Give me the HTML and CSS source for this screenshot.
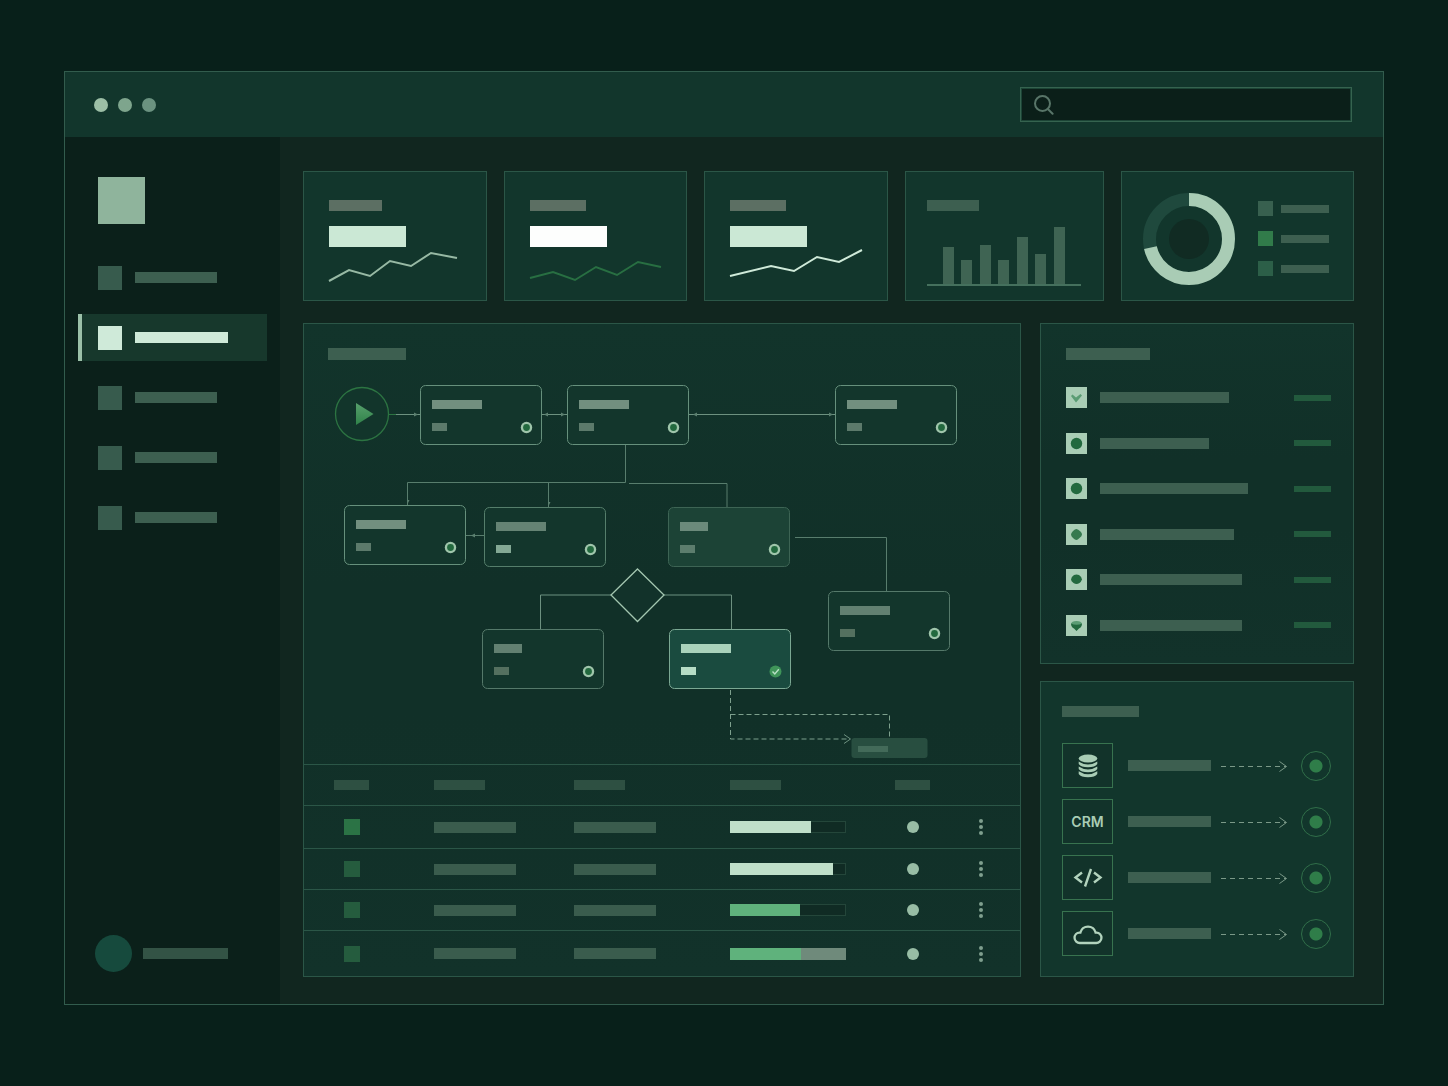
FILE: index.html
```html
<!DOCTYPE html>
<html lang="en">
<head>
<meta charset="utf-8">
<meta name="viewport" content="width=device-width, initial-scale=1">
<title>Workflow dashboard</title>
<link rel="stylesheet" href="styles.css">
</head>
<body>
<div class="window">
  <header class="titlebar">
    <div class="lights"><span class="light"></span><span class="light light-2"></span><span class="light light-3"></span></div>
    <label class="search">
      <svg width="20" height="20" viewBox="0 0 20 20" aria-hidden="true"><circle cx="8.5" cy="8.5" r="7.5"/><path d="M13.8 14 L18.6 18.8"/></svg>
      <input type="search" aria-label="Search">
    </label>
  </header>
  <div class="body">
    <aside class="sidebar">
      <div>
        <div class="logo"></div>
        <nav class="nav">
          <a class="nav-item" href="#overview" aria-label="Overview"><span class="nav-icon"></span><span class="bar nav-text"></span></a>
          <a class="nav-item active" href="#flows" aria-label="Flows" aria-current="page"><span class="nav-icon"></span><span class="bar nav-text"></span></a>
          <a class="nav-item" href="#tasks" aria-label="Tasks"><span class="nav-icon"></span><span class="bar nav-text"></span></a>
          <a class="nav-item" href="#reports" aria-label="Reports"><span class="nav-icon"></span><span class="bar nav-text"></span></a>
          <a class="nav-item" href="#settings" aria-label="Settings"><span class="nav-icon"></span><span class="bar nav-text"></span></a>
        </nav>
      </div>
      <div class="profile"><span class="avatar"></span><span class="bar profile-name"></span></div>
    </aside>

    <main class="main">
      <section class="kpis">
        <article class="card">
          <span class="bar kpi-label kpi-label-s"></span>
          <span class="kpi-value"></span>
          <svg class="spark" width="136" height="38" viewBox="0 0 136 38"><polyline points="0,33 20,22 41,28 61,13 82,18 102,5 128,10"/></svg>
        </article>
        <article class="card">
          <span class="bar kpi-label"></span>
          <span class="kpi-value kpi-white"></span>
          <svg class="spark spark-green" width="136" height="38" viewBox="0 0 136 38"><polyline points="0,30 23,24 45,32 66,19 87,27 108,14 131,19"/></svg>
        </article>
        <article class="card">
          <span class="bar kpi-label"></span>
          <span class="kpi-value"></span>
          <svg class="spark spark-bright" width="136" height="38" viewBox="0 0 136 38"><polyline points="0,28 41,18 64,23 87,9 109,14 132,2"/></svg>
        </article>
        <article class="card card-bars">
          <span class="bar kpi-label kpi-label-dim"></span>
          <div class="columns">
            <span style="height:37px"></span><span style="height:24px"></span><span style="height:39px"></span><span style="height:24px"></span><span style="height:47px"></span><span style="height:30px"></span><span style="height:57px"></span>
          </div>
        </article>
        <article class="card card-donut">
          <svg width="92" height="92" viewBox="0 0 92 92">
            <circle class="donut-track" cx="46" cy="46" r="39.5"/>
            <circle class="donut-value" cx="46" cy="46" r="39.5" stroke-dasharray="177.2 248.2" transform="rotate(-90 46 46)"/>
            <circle class="donut-core" cx="46" cy="46" r="20"/>
          </svg>
          <ul class="legend">
            <li><span class="swatch"></span><span class="bar"></span></li>
            <li><span class="swatch swatch-green"></span><span class="bar"></span></li>
            <li><span class="swatch swatch-dark"></span><span class="bar"></span></li>
          </ul>
        </article>
      </section>

      <section class="panels">
        <div class="panel flow-panel">
          <div class="flow-head"><span class="bar title"></span></div>
          <svg class="flow" viewBox="304 360 716 404">
            <defs>
              <linearGradient id="play" x1="0" y1="0" x2="0" y2="1"><stop offset="0" stop-color="#57a06c"/><stop offset="1" stop-color="#2f8249"/></linearGradient>
              <g id="base">
                <rect class="box" x="0.5" y="0.5" width="121" height="59" rx="5"/>
                <rect class="sub" x="12" y="38" width="15" height="8"/>
              </g>
              <g id="status">
                <circle class="ring" cx="106.5" cy="42.5" r="5.7"/>
                <circle class="dot" cx="106.5" cy="42.5" r="3.4"/>
              </g>
              <g id="step"><use href="#base"/><rect class="name" x="12" y="15" width="50" height="9"/><use href="#status"/></g>
              <g id="step-short"><use href="#base"/><rect class="name" x="12" y="15" width="28" height="9"/><use href="#status"/></g>
              <g id="step-done">
                <use href="#base"/><rect class="name" x="12" y="15" width="50" height="9"/>
                <circle class="done" cx="106.5" cy="42.5" r="6"/><path class="tick" stroke-width="1.4" d="M103.5 42.5 l2.3 2.4 l4 -4.6"/>
              </g>
            </defs>

            <g class="wires">
              <path class="wire-strong" d="M396 414.5 H420 M542 414.5 H567 M689 414.5 H835"/>
              <path class="wire-green" d="M389 414.5 H396"/>
              <path d="M625.5 445 V482.5 H407.5 V505 M548.5 482.5 V507 M629 483.5 H727 V508"/>
              <path d="M466 535.5 H485 M795 537.5 H886.5 V592"/>
              <path class="wire-strong" d="M611 595 H540.5 V630 M664 595 H731.5 V630"/>
              <path class="heads" d="M414 412.5 l4 2 l-4 2z M548 412.5 l-4 2 l4 2z M561 412.5 l4 2 l-4 2z M697 412.5 l-4 2 l4 2z M829 412.5 l4 2 l-4 2z M475 533.5 l-4 2 l4 2z M407.5 504 l0 -4 l2 0z M548.5 506 l0 -4 l2 0z"/>
              <path class="dashed" d="M730.5 690 V739 H850 M730.5 714.5 H889.5 V739"/>
              <path class="wire-strong" d="M844 734.5 L850.5 739 L844 743.5"/>
            </g>

            <circle class="start" stroke-width="1.3" cx="362" cy="414" r="26.5"/>
            <path fill="url(#play)" d="M356 403 L373.5 414 L356 425z"/>
            <path class="decision" stroke-width="1.3" d="M637.5 569 L664 595 L637.5 621.5 L611 595z"/>

            <use class="node" href="#step" x="420" y="385"/>
            <use class="node" href="#step" x="567" y="385"/>
            <use class="node" href="#step" x="835" y="385"/>
            <use class="node" href="#step" x="344" y="505"/>
            <use class="node node-lit" href="#step" x="484" y="507"/>
            <use class="node node-muted" href="#step-short" x="668" y="507"/>
            <use class="node node-soft" href="#step" x="828" y="591"/>
            <use class="node node-soft" href="#step-short" x="482" y="629"/>
            <use class="node node-active" href="#step-done" x="669" y="629"/>

            <rect class="chip" x="851.5" y="738" width="76" height="20" rx="3"/>
            <rect class="chip-text" x="858" y="746" width="30" height="6"/>
          </svg>

          <table class="runs">
            <colgroup><col class="c1"><col class="c2"><col class="c3"><col class="c4"><col class="c5"><col class="c6"></colgroup>
            <thead>
              <tr>
                <th scope="col"><span class="bar th-bar th-short"></span></th>
                <th scope="col"><span class="bar th-bar"></span></th>
                <th scope="col"><span class="bar th-bar"></span></th>
                <th scope="col"><span class="bar th-bar"></span></th>
                <th scope="col"><span class="bar th-bar th-short"></span></th>
                <th scope="col" aria-label="Actions"></th>
              </tr>
            </thead>
            <tbody>
              <tr>
                <td><span class="tag tag-bright"></span></td><td><span class="bar td-bar"></span></td><td><span class="bar td-bar"></span></td>
                <td><div class="progress"><span style="width:71%"></span></div></td><td><span class="state"></span></td>
                <td><button class="more" aria-label="More"><i></i><i></i><i></i></button></td>
              </tr>
              <tr>
                <td><span class="tag"></span></td><td><span class="bar td-bar"></span></td><td><span class="bar td-bar"></span></td>
                <td><div class="progress"><span style="width:90%"></span></div></td><td><span class="state"></span></td>
                <td><button class="more" aria-label="More"><i></i><i></i><i></i></button></td>
              </tr>
              <tr>
                <td><span class="tag"></span></td><td><span class="bar td-bar"></span></td><td><span class="bar td-bar"></span></td>
                <td><div class="progress progress-green"><span style="width:61%"></span></div></td><td><span class="state"></span></td>
                <td><button class="more" aria-label="More"><i></i><i></i><i></i></button></td>
              </tr>
              <tr>
                <td><span class="tag"></span></td><td><span class="bar td-bar"></span></td><td><span class="bar td-bar"></span></td>
                <td><div class="progress progress-green progress-full"><span style="width:62%"></span></div></td><td><span class="state"></span></td>
                <td><button class="more" aria-label="More"><i></i><i></i><i></i></button></td>
              </tr>
            </tbody>
          </table>
        </div>

        <div class="side">
          <div class="panel tasks">
            <span class="bar title"></span>
            <ul class="task-list">
              <li><svg class="mark" viewBox="0 0 21 21"><path class="mark-tick" d="M5 9 L6.5 7.5 L10 10.5 L14.5 7 L16 8.5 L10 15.5z"/></svg><span class="bar" style="width:129px"></span><span class="due"></span></li>
              <li><svg class="mark" viewBox="0 0 21 21"><circle cx="10.5" cy="10.5" r="5.7"/></svg><span class="bar" style="width:109px"></span><span class="due"></span></li>
              <li><svg class="mark" viewBox="0 0 21 21"><circle cx="10.5" cy="10.5" r="5.7"/></svg><span class="bar" style="width:148px"></span><span class="due"></span></li>
              <li><svg class="mark mark-light" viewBox="0 0 21 21"><path d="M10.5 5 Q12 5 14.5 7.5 Q16 9 16 10.5 Q16 12 13.5 14 Q11.500 16 10.5 16 Q9 16 7 14 Q5 12 5 10.5 Q5 9 7 7 Q9 5 10.5 5z"/></svg><span class="bar" style="width:134px"></span><span class="due"></span></li>
              <li><svg class="mark" viewBox="0 0 21 21"><path d="M8 6 Q10.5 5 13 6 Q16 8 16 10.5 Q15 13 13.5 14 Q10.5 16 7.5 14 Q5 12 5 10.5 Q5 8 8 6z"/></svg><span class="bar" style="width:142px"></span><span class="due"></span></li>
              <li><svg class="mark" viewBox="0 0 21 21"><path class="mark-tick" d="M5 9 Q5.5 6 10.5 6 T16 9 L10.5 11z"/><path d="M5 8.5 Q10.5 11 16 8.5 Q16 12 13 13.5 L10.5 16 L8 13.5 Q5 12 5 8.5z"/></svg><span class="bar" style="width:142px"></span><span class="due"></span></li>
            </ul>
          </div>

          <div class="panel sources">
            <span class="bar title"></span>
            <ul class="source-list">
              <li>
                <span class="tile"><svg width="20" height="24" viewBox="0 0 20 24"><ellipse class="solid" cx="10" cy="4.5" rx="9.3" ry="4"/><path class="solid" d="M.7 7.5 Q10 13.5 19.3 7.5 V10 Q17 13.2 10 13.2 T.7 10z M.7 12.4 Q10 18.4 19.3 12.4 V15 Q17 18.2 10 18.2 T.7 15z M.7 17.3 Q10 23.3 19.3 17.3 V20 Q17 23.2 10 23.2 T.7 20z"/></svg></span>
                <span class="bar source-name"></span>
                <svg class="arrow" width="68" height="12" viewBox="0 0 68 12"><path class="dash" d="M1 6.5 H66"/><path d="M59.5 1.5 L66.5 6.5 L59.5 11.5"/></svg>
                <span class="radar"></span>
              </li>
              <li>
                <span class="tile">CRM</span>
                <span class="bar source-name"></span>
                <svg class="arrow" width="68" height="12" viewBox="0 0 68 12"><path class="dash" d="M1 6.5 H66"/><path d="M59.5 1.5 L66.5 6.5 L59.5 11.5"/></svg>
                <span class="radar"></span>
              </li>
              <li>
                <span class="tile"><svg width="30" height="20" viewBox="0 0 30 20"><path class="line" stroke-width="2.4" d="M9 4.5 L2.5 9.5 L9 14.5 M21 4.5 L27.500 9.5 L21 14.5 M18 1 L12 18.5"/></svg></span>
                <span class="bar source-name"></span>
                <svg class="arrow" width="68" height="12" viewBox="0 0 68 12"><path class="dash" d="M1 6.5 H66"/><path d="M59.5 1.5 L66.5 6.5 L59.5 11.5"/></svg>
                <span class="radar"></span>
              </li>
              <li>
                <span class="tile"><svg width="30" height="22" viewBox="0 0 30 22"><path class="line" stroke-width="2.3" d="M7 20 H23 A5.2 5.2 0 0 0 23.500 9.6 H22.6 A7.8 7.8 0 0 0 7.4 9.6 H6.5 A5.2 5.2 0 0 0 7 20z"/></svg></span>
                <span class="bar source-name"></span>
                <svg class="arrow" width="68" height="12" viewBox="0 0 68 12"><path class="dash" d="M1 6.5 H66"/><path d="M59.5 1.5 L66.5 6.5 L59.5 11.5"/></svg>
                <span class="radar"></span>
              </li>
            </ul>
          </div>
        </div>
      </section>
    </main>
  </div>
</div>
</body>
</html>
```

FILE: styles.css
```css
:root {
  --page: #08201a;
  --main: #11261f;
  --side: #0b201a;
  --edge: #2b5647;
  --bar: #3d5f50;
  --pale: #a9cdb5;
}

* { box-sizing: border-box; }

body {
  margin: 0;
  padding: 71px 64px 81px;
  background: var(--page);
  font-family: Inter, "Liberation Sans", sans-serif;
}

ul { list-style: none; margin: 0; padding: 0; }
svg { display: block; flex: none; }
a { text-decoration: none; }

.bar { display: block; height: 11px; background: var(--bar); flex: none; }

.window { border: 1px solid #325c4d; background: var(--main); }

/* title bar */
.titlebar {
  display: flex;
  align-items: center;
  justify-content: space-between;
  height: 65px;
  padding: 0 31px 0 29px;
  background: #12362c;
}
.lights { display: flex; gap: 10px; }
.light { width: 14px; height: 14px; border-radius: 50%; background: #9cbfa6; }
.light-2 { background: #7ea58d; }
.light-3 { background: #6b9280; }

.search {
  display: flex;
  align-items: center;
  gap: 10px;
  width: 332px;
  height: 35px;
  padding: 0 13px;
  border: 1px solid #35634f;
  outline: 1px solid #1c4436;
  outline-offset: -2px;
  background: #0b1f19;
}
.search svg { fill: none; stroke: #587568; stroke-width: 2; stroke-linecap: round; }
.search input {
  flex: 1;
  min-width: 0;
  border: 0;
  outline: 0;
  background: transparent;
  color: var(--pale);
  font: inherit;
}

.body { display: flex; }

/* sidebar */
.sidebar {
  display: flex;
  flex-direction: column;
  justify-content: space-between;
  flex: none;
  width: 215px;
  padding: 40px 13px 32px;
  background: var(--side);
}
.logo { width: 47px; height: 47px; margin-left: 20px; background: #8fb49c; }
.nav { display: flex; flex-direction: column; gap: 13px; margin-top: 30px; }
.nav-item {
  display: flex;
  align-items: center;
  gap: 13px;
  height: 47px;
  padding-left: 16px;
  border-left: 4px solid transparent;
}
.nav-icon { width: 24px; height: 24px; background: #375b4d; }
.nav-text { width: 82px; }
.active { background: #17382c; border-left-color: #9bc0a8; }
.active .nav-icon { background: #cfead9; }
.active .nav-text { width: 93px; background: #cfead9; }
.profile { display: flex; align-items: center; gap: 11px; padding-left: 17px; }
.avatar { width: 37px; height: 37px; border-radius: 50%; background: #164a3d; }
.profile-name { width: 85px; background: #335345; }

/* main */
.main { flex: 1; min-width: 0; padding: 34px 29px 27px 23px; }

.kpis {
  display: grid;
  grid-template-columns: 367fr 367fr 367fr 398fr 467fr;
  gap: 17px;
}
.card {
  height: 130px;
  padding: 28px 20px 0 25px;
  border: 1px solid var(--edge);
  background: #12362c;
}
.kpi-label { width: 56px; background: #5c6f63; }
.kpi-label-s { width: 53px; }
.kpi-label-dim { width: 52px; background: var(--bar); }
.kpi-value { display: block; width: 77px; height: 21px; margin-top: 15px; background: #cbe8d5; }
.kpi-white { background: #fdfefd; }
.spark { margin-top: 1px; overflow: visible; fill: none; stroke: #97b9a4; stroke-width: 2; }
.spark-green { stroke: #286f42; }
.spark-bright { stroke: #cfead9; }

.card-bars { padding: 28px 22px 0 21px; }
.columns {
  display: flex;
  align-items: flex-end;
  justify-content: space-between;
  height: 75px;
  padding: 0 16px;
  border-bottom: 2px solid #45705d;
}
.columns span { width: 11px; background: #3f6453; }

.card-donut { display: flex; align-items: flex-start; gap: 23px; padding: 21px 20px 0 21px; }
.card-donut circle { fill: none; stroke-width: 13; }
.card-donut .donut-track { stroke: #1f493d; }
.card-donut .donut-value { stroke: #a9ccb5; }
.card-donut .donut-core { fill: #112b23; }
.legend { display: grid; gap: 15px; padding-top: 8px; }
.legend li { display: flex; align-items: center; gap: 8px; }
.legend .bar { width: 48px; height: 8px; }
.swatch { width: 15px; height: 15px; background: #38604f; }
.swatch-green { background: #317b4a; }
.swatch-dark { background: #2c5f48; }

.panels {
  display: grid;
  grid-template-columns: 718fr 314fr;
  gap: 19px;
  margin-top: 22px;
}
.panel { border: 1px solid var(--edge); background: linear-gradient(#12342b, #113028 40%, #113028 60%, #12322a); }
.title { width: 78px; height: 12px; }

/* flow */
.flow-head { padding: 24px 24px 0; }
.flow { width: 100%; height: auto; }
.wires { fill: none; stroke: #587d6d; }
.wire-strong { stroke: #6d9180; }
.wire-green { stroke: #2c7442; }
.heads { fill: #5c8070; stroke: none; }
.dashed { stroke: #7da08d; stroke-dasharray: 5 3; }
.start { fill: #12352b; stroke: #2c7442; }
.decision { fill: #12322a; stroke: #a3c6b0; }

.node { --fill: #13362c; --line: #66907c; --name: #728f7f; --sub: #5c7a6b; }
.node-lit { --line: #557e6b; --name: #658374; --sub: #83a894; }
.node-muted { --fill: #1c4336; --line: #3d6454; --name: #6b8a7b; --sub: #5c7d6d; }
.node-soft { --line: #55796a; --name: #628071; --sub: #54705f; }
.node-active { --fill: #1a4b3f; --line: #7ba893; --name: #a9d2bb; --sub: #b5dcc5; }
.box { fill: var(--fill); stroke: var(--line); }
.name { fill: var(--name); }
.sub { fill: var(--sub); }
.ring { fill: #9fc5ab; }
.dot { fill: #22693e; }
.done { fill: #3f9459; }
.tick { fill: none; stroke: #b9e0c6; }
.chip { fill: #284e40; }
.chip-text { fill: #436a59; }

/* table */
.runs { width: 100%; table-layout: fixed; border-collapse: separate; border-spacing: 0; }
.c1 { width: 130px; }
.c2 { width: 140px; }
.c3 { width: 156px; }
.c4 { width: 150px; }
.c5 { width: 65px; }
.c6 { width: 75px; }
.runs th, .runs td { height: 41px; padding: 0; border-top: 1px solid var(--edge); vertical-align: middle; }
.runs tbody tr:first-child td { height: 43px; }
.runs tbody tr:last-child td { height: 46px; }
.runs th:first-child { padding-left: 30px; }
.runs td:first-child { padding-left: 40px; }
.runs td:last-child { padding-right: 4px; }
.th-bar { width: 51px; height: 10px; background: #2e5042; }
.th-short { width: 35px; }
.runs th:nth-child(5) .bar, .state { margin: 0 auto; }
.td-bar { width: 82px; background: #3a5c4d; }
.tag { display: block; width: 16px; height: 16px; background: #255c3e; }
.tag-bright { background: #2b7345; }
.progress { display: flex; width: 116px; height: 12px; border: 1px solid #24463a; background: #102b24; }
.progress span { margin: -1px 0 -1px -1px; background: #bfdfc9; }
.progress-green span { background: #5fb27c; }
.progress-full { background: #6f8a7b; border-color: #6f8a7b; }
.state { display: block; width: 12px; height: 12px; border-radius: 50%; background: #98bda5; }
.more {
  display: flex;
  flex-direction: column;
  align-items: center;
  gap: 2px;
  width: 16px;
  margin: 0 auto;
  padding: 0;
  border: 0;
  background: none;
}
.more i { width: 4px; height: 4px; border-radius: 50%; background: #7f9f8e; }

/* right column */
.side { display: grid; grid-template-rows: 341fr 296fr; gap: 17px; }
.side .panel { display: flex; flex-direction: column; }
.task-list, .source-list { display: flex; flex-direction: column; justify-content: space-between; flex: 1; }
.task-list li, .source-list li { display: flex; align-items: center; }

.tasks { padding: 24px 22px 27px 25px; }
.tasks .title { width: 84px; }
.task-list { margin-top: 27px; }
.mark { width: 21px; height: 21px; margin-right: 13px; background: #a9cdb5; fill: #22693e; }
.mark-light { fill: #35794f; }
.mark-tick { fill: #5a9c73; }
.due { width: 37px; height: 6px; margin-left: auto; background: #225a3d; }

.side .sources { padding: 24px 22px 20px 21px; background: #12362c; }
.sources .title { width: 77px; height: 11px; }
.source-list { margin-top: 26px; }
.tile {
  display: flex;
  align-items: center;
  justify-content: center;
  width: 51px;
  height: 45px;
  margin-right: 15px;
  border: 1px solid #38734f;
  background: #12332a;
  color: #a9cdb5;
  font-size: 14px;
  font-weight: 600;
}
.solid { fill: #a9cdb5; }
.line { fill: none; stroke: #b2d3bd; }
.source-name { width: 83px; }
.arrow { margin-left: 9px; fill: none; stroke: #7b9988; }
.dash { stroke-dasharray: 5 4; }
.radar {
  width: 30px;
  height: 30px;
  margin-left: auto;
  border: 1px solid #306e49;
  border-radius: 50%;
  background: radial-gradient(circle, #2f7d49 6px, transparent 7px);
}
```
